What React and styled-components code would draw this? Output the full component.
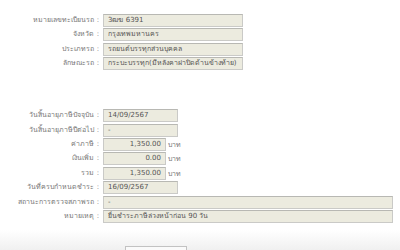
import React from 'react'
import styled, { createGlobalStyle } from 'styled-components'

const GlobalStyle = createGlobalStyle`
  body {
    margin: 0;
    background: #fff;
    font-family: Tahoma, "DejaVu Sans", "Noto Sans", sans-serif;
    font-size: 7px;
    color: #555;
  }
`

const Page = styled.div`
  width: 400px;
  height: 250px;
  overflow: hidden;
  display: flex;
  flex-direction: column;
`

const Section = styled.div`
  display: grid;
  grid-template-columns: 99px 1fr;
  column-gap: 4px;
  row-gap: 1.4px;
  padding-top: ${p => p.top}px;
`

const Label = styled.div`
  text-align: right;
  height: 13px;
  line-height: 13px;
  white-space: nowrap;
  color: #777;
`

const ValueRow = styled.div`
  display: flex;
  align-items: center;
  gap: 2px;
`

const Field = styled.div`
  box-sizing: border-box;
  width: ${p => p.w}px;
  height: 13px;
  line-height: 11px;
  padding: 0 4px;
  background: #ecebdf;
  border: 1px solid #cacac7;
  border-top-color: #b8b8b3;
  color: #555;
  text-align: ${p => (p.num ? 'right' : 'left')};
  white-space: nowrap;
  overflow: hidden;
`

const Unit = styled.span`
  color: #777;
`

const Footer = styled.div`
  margin-top: auto;
  height: 20px;
  background: linear-gradient(#fff, #f0f0f0);
  display: flex;
  align-items: flex-end;
  padding-left: 125px;
`

const Button = styled.div`
  width: 60px;
  height: 3px;
  border: 1px solid #c2c2c2;
  border-bottom: none;
  background: #fafafa;
`

const top = [
  ['หมายเลขทะเบียนรถ', '3ฒฆ 6391'],
  ['จังหวัด', 'กรุงเทพมหานคร'],
  ['ประเภทรถ', 'รถยนต์บรรทุกส่วนบุคคล'],
  ['ลักษณะรถ', 'กระบะบรรทุก(มีหลังคาฝาปิดด้านข้างท้าย)'],
]

const tax = [
  { label: 'วันสิ้นอายุภาษีปัจจุบัน', value: '14/09/2567', w: 75 },
  { label: 'วันสิ้นอายุภาษีปีต่อไป', value: '-', w: 75 },
  { label: 'ค่าภาษี', value: '1,350.00', w: 63, num: true, unit: 'บาท' },
  { label: 'เงินเพิ่ม', value: '0.00', w: 63, num: true, unit: 'บาท' },
  { label: 'รวม', value: '1,350.00', w: 63, num: true, unit: 'บาท' },
  { label: 'วันที่ครบกำหนดชำระ', value: '16/09/2567', w: 75 },
  { label: 'สถานะการตรวจสภาพรถ', value: '-', w: 290 },
  { label: 'หมายเหตุ', value: 'ยื่นชำระภาษีล่วงหน้าก่อน 90 วัน', w: 290 },
]

export default function App() {
  return (
    <Page>
      <GlobalStyle />
      <Section top={14}>
        {top.map(([l, v]) => (
          <React.Fragment key={l}>
            <Label>{l} :</Label>
            <ValueRow>
              <Field w={140}>{v}</Field>
            </ValueRow>
          </React.Fragment>
        ))}
      </Section>
      <Section top={39}>
        {tax.map(r => (
          <React.Fragment key={r.label}>
            <Label>{r.label} :</Label>
            <ValueRow>
              <Field w={r.w} num={r.num}>{r.value}</Field>
              {r.unit && <Unit>{r.unit}</Unit>}
            </ValueRow>
          </React.Fragment>
        ))}
      </Section>
      <Footer>
        <Button />
      </Footer>
    </Page>
  )
}
